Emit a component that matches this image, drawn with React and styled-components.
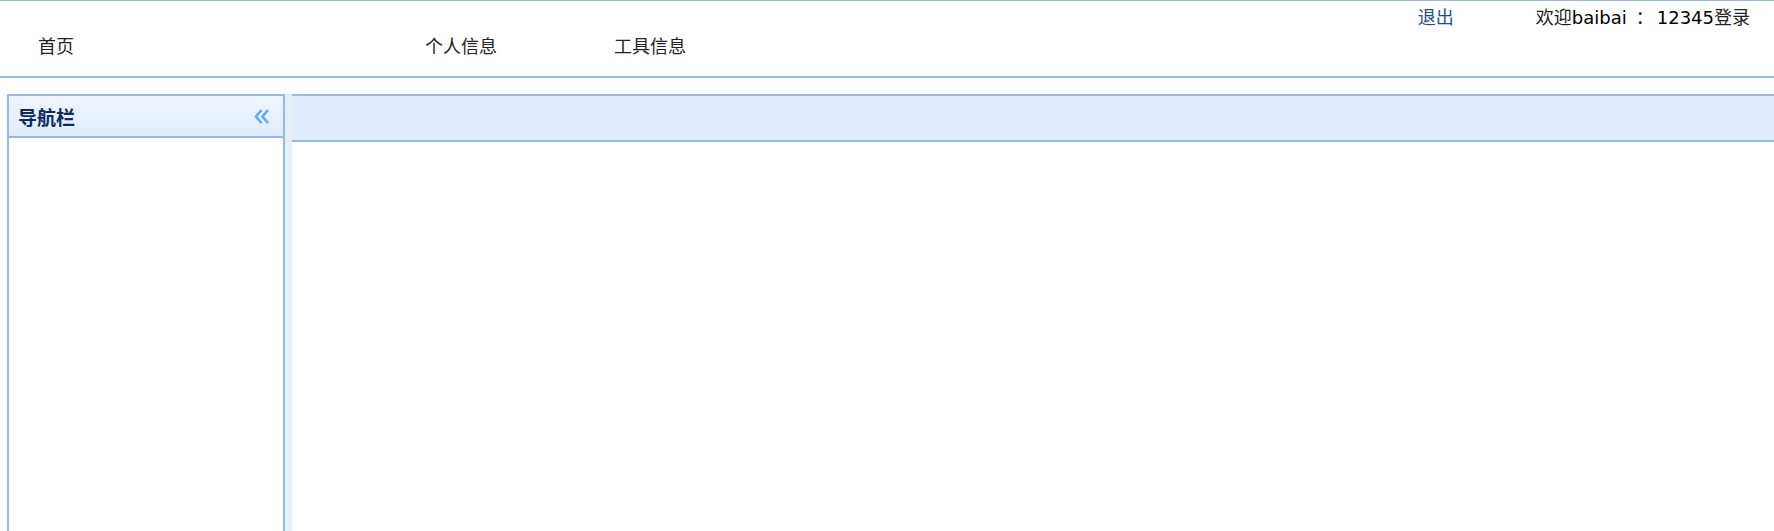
import React from "react";
import styled, { createGlobalStyle } from "styled-components";

const GlobalStyle = createGlobalStyle`
  html, body {
    margin: 0;
    padding: 0;
    background: #fff;
    overflow: hidden;
  }
  body {
    font-family: "DejaVu Sans", "Noto Sans CJK SC", sans-serif;
    font-size: 18px;
  }
`;

const Header = styled.header`
  height: 75px;
  border-top: 1px solid #95b8e7;
  border-bottom: 2px solid #95b8e7;
  display: flex;
  flex-direction: column;
`;

const TopLinks = styled.div`
  display: flex;
  justify-content: flex-end;
  align-items: center;
  gap: 82px;
  height: 31px;
  padding-right: 24px;
`;

const Logout = styled.a`
  color: #1f4e8c;
  text-decoration: none;
  font-family: "Noto Sans CJK SC", sans-serif;
  font-size: 18px;
  line-height: 31px;
`;

const Welcome = styled.span`
  color: #000;
  line-height: 31px;
  font-family: "DejaVu Sans", "Noto Sans CJK SC", sans-serif;
`;

const Cjk = styled.span`
  font-family: "Noto Sans CJK SC", sans-serif;
  color: #222;
  margin: ${(p) => p.$gap || "0"};
`;

const NavRow = styled.nav`
  display: flex;
  align-items: center;
  height: 26px;
  padding-left: 38px;
`;

const NavItem = styled.a`
  width: ${(p) => p.$width || "auto"};
  flex: none;
  color: #222;
  text-decoration: none;
  font-family: "Noto Sans CJK SC", sans-serif;
  font-size: 18px;
  line-height: 26px;
`;

const Main = styled.main`
  display: flex;
  margin-top: 16px;
  padding-left: 7px;
  height: calc(100vh - 94px);
`;

const Sidebar = styled.aside`
  width: 274px;
  flex: none;
  border: 2px solid #95b8e7;
  border-bottom: none;
  display: flex;
  flex-direction: column;
`;

const SidebarHeader = styled.div`
  height: 40px;
  background: linear-gradient(to bottom, #eff5ff 0, #e0ecff 100%);
  border-bottom: 2px solid #95b8e7;
  display: flex;
  align-items: center;
  justify-content: space-between;
  padding: 0 13px 0 9px;
`;

const SidebarTitle = styled.span`
  font-family: "Noto Sans CJK SC", sans-serif;
  font-weight: 700;
  font-size: 19px;
  color: #0e2d5f;
`;

const CollapseButton = styled.span`
  display: flex;
  align-items: center;
  cursor: pointer;
`;

const SidebarBody = styled.div`
  flex: 1;
  background: #fff;
`;

const Splitter = styled.div`
  width: 7px;
  flex: none;
  background: #e6eef8;
`;

const Content = styled.section`
  flex: 1;
  display: flex;
  flex-direction: column;
`;

const ContentHeader = styled.div`
  height: 44px;
  background: #e0ecff;
  border-top: 2px solid #95b8e7;
  border-bottom: 2px solid #95b8e7;
`;

const ContentBody = styled.div`
  flex: 1;
  background: #fff;
`;

const DoubleLeft = () => (
  <svg width="17" height="17" viewBox="0 0 17 17" fill="none">
    <path d="M8.5 2 L3 8.5 L8.5 15" stroke="#62aaee" strokeWidth="2.6" />
    <path d="M15 2 L9.5 8.5 L15 15" stroke="#62aaee" strokeWidth="2.6" />
  </svg>
);

const App = () => {
  return (
    <>
      <GlobalStyle />
      <Header>
        <TopLinks>
          <Logout href="#">退出</Logout>
          <Welcome>
            <Cjk>欢迎</Cjk>baibai<Cjk $gap="0 3px 0 9px">：</Cjk>12345<Cjk>登录</Cjk>
          </Welcome>
        </TopLinks>
        <NavRow>
          <NavItem $width="387px">首页</NavItem>
          <NavItem $width="189px">个人信息</NavItem>
          <NavItem>工具信息</NavItem>
        </NavRow>
      </Header>
      <Main>
        <Sidebar>
          <SidebarHeader>
            <SidebarTitle>导航栏</SidebarTitle>
            <CollapseButton>
              <DoubleLeft />
            </CollapseButton>
          </SidebarHeader>
          <SidebarBody />
        </Sidebar>
        <Splitter />
        <Content>
          <ContentHeader />
          <ContentBody />
        </Content>
      </Main>
    </>
  );
};

export default App;
